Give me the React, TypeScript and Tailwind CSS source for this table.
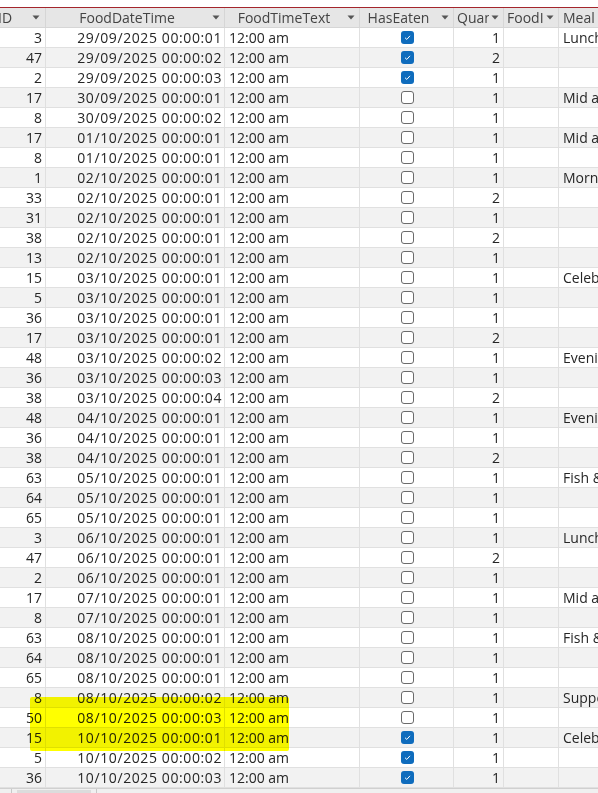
import React from "react";

type Row = [number, string, boolean, number, string];

const rows: Row[] = [
  [3, "29/09/2025 00:00:01", true, 1, "Lunch"],
  [47, "29/09/2025 00:00:02", true, 2, ""],
  [2, "29/09/2025 00:00:03", true, 1, ""],
  [17, "30/09/2025 00:00:01", false, 1, "Mid afternoon"],
  [8, "30/09/2025 00:00:02", false, 1, ""],
  [17, "01/10/2025 00:00:01", false, 1, "Mid afternoon"],
  [8, "01/10/2025 00:00:01", false, 1, ""],
  [1, "02/10/2025 00:00:01", false, 1, "Morning snack"],
  [33, "02/10/2025 00:00:01", false, 2, ""],
  [31, "02/10/2025 00:00:01", false, 1, ""],
  [38, "02/10/2025 00:00:01", false, 2, ""],
  [13, "02/10/2025 00:00:01", false, 1, ""],
  [15, "03/10/2025 00:00:01", false, 1, "Celebration"],
  [5, "03/10/2025 00:00:01", false, 1, ""],
  [36, "03/10/2025 00:00:01", false, 1, ""],
  [17, "03/10/2025 00:00:01", false, 2, ""],
  [48, "03/10/2025 00:00:02", false, 1, "Evening meal"],
  [36, "03/10/2025 00:00:03", false, 1, ""],
  [38, "03/10/2025 00:00:04", false, 2, ""],
  [48, "04/10/2025 00:00:01", false, 1, "Evening meal"],
  [36, "04/10/2025 00:00:01", false, 1, ""],
  [38, "04/10/2025 00:00:01", false, 2, ""],
  [63, "05/10/2025 00:00:01", false, 1, "Fish & chips"],
  [64, "05/10/2025 00:00:01", false, 1, ""],
  [65, "05/10/2025 00:00:01", false, 1, ""],
  [3, "06/10/2025 00:00:01", false, 1, "Lunch"],
  [47, "06/10/2025 00:00:01", false, 2, ""],
  [2, "06/10/2025 00:00:01", false, 1, ""],
  [17, "07/10/2025 00:00:01", false, 1, "Mid afternoon"],
  [8, "07/10/2025 00:00:01", false, 1, ""],
  [63, "08/10/2025 00:00:01", false, 1, "Fish & chips"],
  [64, "08/10/2025 00:00:01", false, 1, ""],
  [65, "08/10/2025 00:00:01", false, 1, ""],
  [8, "08/10/2025 00:00:02", false, 1, "Supper"],
  [50, "08/10/2025 00:00:03", false, 1, ""],
  [15, "10/10/2025 00:00:01", true, 1, "Celebration"],
  [5, "10/10/2025 00:00:02", true, 1, ""],
  [36, "10/10/2025 00:00:03", true, 1, ""],
];

const cols = "grid grid-cols-[46px_179px_135px_94px_50px_55px_1fr]";

function Arrow() {
  return (
    <svg width="8" height="5" viewBox="0 0 8 5" className="shrink-0">
      <path d="M0.5 0.5 L7.5 0.5 L4 4.5 Z" fill="#555" />
    </svg>
  );
}

function HeadCell({ label }: { label: string }) {
  return (
    <div className="flex items-center border-r border-[#d6d6d6] overflow-hidden whitespace-nowrap">
      <span className="flex-1 overflow-hidden text-center">{label}</span>
      <span className="px-[4px] flex items-center"><Arrow /></span>
    </div>
  );
}

function NarrowHead({ label }: { label: string }) {
  return (
    <div className="flex items-center border-r border-[#d6d6d6] overflow-hidden whitespace-nowrap pl-[3px]">
      <span className="min-w-0 flex-1 overflow-hidden">{label}</span>
      <span className="pl-[2px] pr-[4px] flex items-center bg-[#e6e6e6]"><Arrow /></span>
    </div>
  );
}

function Check({ on }: { on: boolean }) {
  if (on) {
    return (
      <div className="w-[13px] h-[13px] rounded-[3px] bg-[#0f6cbd] flex items-center justify-center">
        <svg width="9" height="9" viewBox="0 0 9 9">
          <path d="M2 4.7 L3.8 6.4 L7 2.8" fill="none" stroke="#fff" strokeWidth="1" />
        </svg>
      </div>
    );
  }
  return <div className="w-[13px] h-[13px] rounded-[3px] border border-[#6b6b6b] bg-white" />;
}

export default function App() {
  return (
    <div
      className="relative w-[598px] h-[793px] overflow-hidden bg-white text-[#262626]"
      style={{ fontFamily: '"Open Sans", "Noto Sans", sans-serif' }}
    >
      <div className="h-[7px] bg-white" />
      <div className="h-px bg-[#a4262c]" />
      <div className={`${cols} h-[19px] bg-[#e6e6e6] text-[#444] text-[14px] leading-[19px] border-b border-[#d6d6d6] box-content`}>
        <div className="flex items-center border-r border-[#d6d6d6] overflow-hidden whitespace-nowrap">
          <span className="flex-1 -ml-[2px]">ID</span>
          <span className="px-[5px] flex items-center"><Arrow /></span>
        </div>
        <HeadCell label="FoodDateTime" />
        <HeadCell label="FoodTimeText" />
        <HeadCell label="HasEaten" />
        <NarrowHead label="Quantity" />
        <NarrowHead label="FoodID" />
        <div className="flex items-center overflow-hidden whitespace-nowrap pl-[4px]">Meal</div>
      </div>
      {rows.map((r, i) => (
        <div
          key={i}
          className={`${cols} h-[20px] text-[14px] leading-[19px] border-b border-[#e0e0e0] ${i % 2 === 1 ? "bg-[#f2f2f2]" : "bg-white"}`}
        >
          <div className="border-r border-[#e0e0e0] text-right pr-[3px]">{r[0]}</div>
          <div className="border-r border-[#e0e0e0] text-right pr-[2px] whitespace-nowrap overflow-hidden tracking-[0.6px]">{r[1]}</div>
          <div className="border-r border-[#e0e0e0] pl-[4px] whitespace-nowrap">12:00 am</div>
          <div className="border-r border-[#e0e0e0] flex items-center justify-center pl-[2px]">
            <Check on={r[2]} />
          </div>
          <div className="border-r border-[#e0e0e0] text-right pr-[3px]">{r[3]}</div>
          <div className="border-r border-[#e0e0e0]" />
          <div className="pl-[4px] whitespace-nowrap overflow-hidden">{r[4]}</div>
        </div>
      ))}
      <div className="h-[6px] bg-[#f0f0f0] border-t border-[#d0d0d0] flex">
        <div className="w-[12px] border-r border-[#c8c8c8]" />
        <div className="w-[85px] border-r border-[#c8c8c8] pt-[1px] px-[5px]">
          <div className="h-[4px] bg-[#dcdcdc]" />
        </div>
      </div>
      <div className="absolute left-[30px] top-[697px] w-[259px] h-[54px] bg-[#ffff00] mix-blend-multiply rounded-[2px]" />
    </div>
  );
}
